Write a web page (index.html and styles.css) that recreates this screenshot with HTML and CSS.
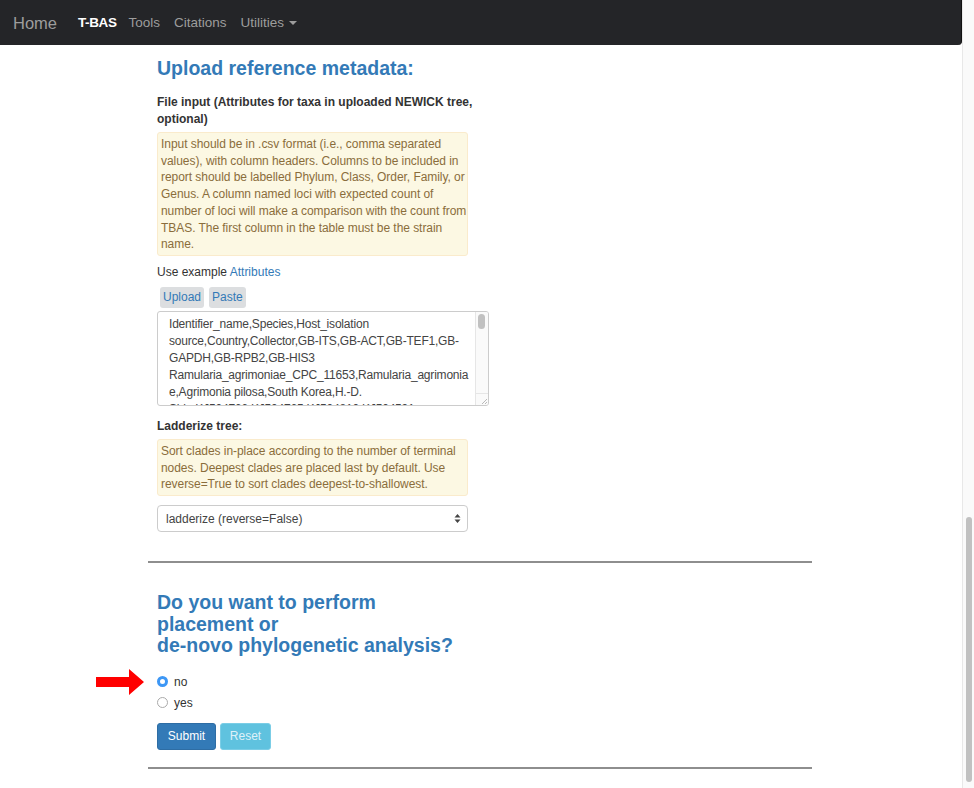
FILE: index.html
```html
<!DOCTYPE html>
<html>
<head>
<meta charset="utf-8">
<link rel="stylesheet" href="styles.css">
</head>
<body>
<div class="page">
  <nav class="navbar">
    <a class="brand">Home</a>
    <a class="nav-link active">T-BAS</a>
    <a class="nav-link">Tools</a>
    <a class="nav-link">Citations</a>
    <a class="nav-link">Utilities <span class="caret"></span></a>
  </nav>
  <div class="container">
    <div class="col">
      <h2 class="title">Upload reference metadata:</h2>
      <div class="label">File input (Attributes for taxa in uploaded NEWICK tree,<br>optional)</div>
      <div class="alert">Input should be in .csv format (i.e., comma separated<br>values), with column headers. Columns to be included in<br>report should be labelled Phylum, Class, Order, Family, or<br>Genus. A column named loci with expected count of<br>number of loci will make a comparison with the count from<br>TBAS. The first column in the table must be the strain<br>name.</div>
      <div class="example">Use example <a class="link">Attributes</a></div>
      <div class="btn-row">
        <span class="btn-light">Upload</span>
        <span class="btn-light">Paste</span>
      </div>
      <div class="textarea">
        <div class="ta-text">
          <div>Identifier_name,Species,Host_isolation</div>
          <div>source,Country,Collector,GB-ITS,GB-ACT,GB-TEF1,GB-</div>
          <div>GAPDH,GB-RPB2,GB-HIS3</div>
          <div>Ramularia_agrimoniae_CPC_11653,Ramularia_agrimonia</div>
          <div>e,Agrimonia pilosa,South Korea,H.-D.</div>
          <div class="ta-last">Shin,KJ504766,KJ504765,KJ504810,KJ504591</div>
        </div>
        <div class="ta-scroll">
          <div class="ta-track"><div class="ta-thumb"></div></div>
          <div class="ta-grip">
            <svg width="8" height="8" viewBox="0 0 8 8"><path d="M7 2 L2 7 M7 5 L5 7" stroke="#aaa" stroke-width="0.8" fill="none"/></svg>
          </div>
        </div>
      </div>
      <div class="label label-gap">Ladderize tree:</div>
      <div class="alert">Sort clades in-place according to the number of terminal<br>nodes. Deepest clades are placed last by default. Use<br>reverse=True to sort clades deepest-to-shallowest.</div>
      <div class="select">
        <span>ladderize (reverse=False)</span>
        <svg width="7" height="11" viewBox="0 0 7 11"><path d="M3.5 1 L6.5 4.5 H0.5 Z M3.5 10 L6.5 6.5 H0.5 Z" fill="#444"/></svg>
      </div>
    </div>
    <hr class="rule">
    <div class="col">
      <h2 class="title q">Do you want to perform placement or<br>de-novo phylogenetic analysis?</h2>
      <div class="radios">
        <div class="radio-row">
          <svg class="arrow" width="48" height="26" viewBox="0 0 48 26"><path d="M0 8 H33 V0 L48 13 L33 26 V18 H0 Z" fill="#f00"/></svg>
          <span class="radio checked"></span><span>no</span>
        </div>
        <div class="radio-row">
          <span class="radio"></span><span>yes</span>
        </div>
      </div>
      <div class="actions">
        <span class="btn btn-primary">Submit</span>
        <span class="btn btn-info">Reset</span>
      </div>
    </div>
    <hr class="rule rule-bottom">
  </div>
</div>
<div class="scrollbar"><div class="thumb"></div></div>
</body>
</html>
```
FILE: styles.css
```css
html, body {
  margin: 0;
  padding: 0;
  height: 788px;
  overflow: hidden;
}
body {
  display: flex;
  font-family: "Liberation Sans", Arial, sans-serif;
  font-size: 12px;
  color: #333;
  background: #fff;
}
.page {
  flex: 1;
  min-width: 0;
}
.navbar {
  height: 45px;
  background: #242528;
  border-radius: 0 0 4px 0;
  display: flex;
  align-items: center;
  box-sizing: border-box;
  padding-left: 13px;
  border-right: 1px solid #111;
}
.navbar a {
  color: #9d9d9d;
  text-decoration: none;
}
.brand {
  font-size: 16.5px;
  margin-right: 21px;
  position: relative;
  top: 1px;
}
.nav-link {
  font-size: 13.5px;
  margin-right: 14px;
}
.nav-link.active {
  color: #fff !important;
  font-weight: bold;
  letter-spacing: -0.4px;
  margin-right: 12px;
}
.caret {
  display: inline-block;
  width: 0;
  height: 0;
  border-left: 4px solid transparent;
  border-right: 4px solid transparent;
  border-top: 4px solid #9d9d9d;
  vertical-align: middle;
  margin-left: 1px;
}
.container {
  margin-left: 148px;
  width: 664px;
}
.col {
  padding-left: 9px;
  width: 311px;
}
.title {
  margin: 12px 0 0;
  font-size: 19.5px;
  line-height: 22px;
  font-weight: bold;
  color: #337ab7;
}
.label {
  margin-top: 15px;
  font-weight: bold;
  line-height: 17px;
  white-space: nowrap;
}
.label-gap {
  margin-top: 12px;
}
.alert {
  margin-top: 4px;
  background: #fcf8e3;
  border: 1px solid #faebcc;
  border-radius: 3px;
  color: #8a6d3b;
  padding: 3px 3px 2px;
  line-height: 16.7px;
  white-space: nowrap;
  letter-spacing: -0.05px;
}
.example {
  margin-top: 8px;
  line-height: 17px;
}
.link {
  color: #337ab7;
}
.btn-row {
  margin-top: 6px;
  display: flex;
  gap: 5px;
  padding-left: 3px;
}
.btn-light {
  background: #dcdee0;
  color: #337ab7;
  border-radius: 3px;
  height: 21px;
  line-height: 21px;
  padding: 0 3px;
}
.textarea {
  margin-top: 3px;
  width: 332px;
  height: 95px;
  box-sizing: border-box;
  border: 1px solid #ccc;
  border-radius: 3px;
  display: flex;
  overflow: hidden;
}
.ta-text {
  flex: 1;
  min-width: 0;
  padding: 4px 0 0 11px;
  line-height: 17px;
  color: #444;
  white-space: nowrap;
  overflow: hidden;
  letter-spacing: -0.2px;
}
.ta-last {
  height: 7px;
  overflow: hidden;
}
.ta-scroll {
  width: 12px;
  flex: none;
  border-left: 1px solid #e6e6e6;
  display: flex;
  flex-direction: column;
  background: #fafafa;
}
.ta-track {
  flex: 1;
  padding: 2px 2px 0 2px;
}
.ta-thumb {
  width: 7px;
  height: 15px;
  background: #c1c1c1;
  border-radius: 4px;
}
.ta-grip {
  height: 11px;
  border-top: 1px solid #e6e6e6;
  display: flex;
  justify-content: flex-end;
  align-items: flex-end;
}
.ta-grip svg {
  display: block;
}
.select {
  margin-top: 9px;
  height: 27px;
  box-sizing: border-box;
  border: 1px solid #ccc;
  border-radius: 4px;
  display: flex;
  align-items: center;
  justify-content: space-between;
  padding: 0 6px 0 8px;
  color: #444;
  background: #fff;
}
.rule {
  margin: 29px 0 0;
  border: 0;
  height: 2px;
  background: #8e8e8e;
}
.rule-bottom {
  margin-top: 17px;
}
.q {
  margin-top: 29px;
  line-height: 21.7px;
}
.radios {
  margin-top: 14px;
}
.radio-row {
  position: relative;
  height: 21px;
  display: flex;
  align-items: center;
  gap: 6px;
}
.arrow {
  position: absolute;
  left: -61px;
  top: -2px;
}
.radio {
  width: 11px;
  height: 11px;
  box-sizing: border-box;
  border-radius: 50%;
  border: 1px solid #aaa;
  background: #fff;
}
.radio.checked {
  border: 3.5px solid #3d97f5;
  background: #fff;
}
.actions {
  margin-top: 10px;
  display: flex;
  gap: 4px;
}
.btn {
  height: 27px;
  line-height: 27px;
  box-sizing: border-box;
  border-radius: 3px;
  color: #fff;
  text-align: center;
}
.btn-primary {
  width: 59px;
  background: #337ab7;
  border: 1px solid #2e6da4;
  line-height: 25px;
}
.btn-info {
  width: 51px;
  background: #5fc2df;
  border: 1px solid #7bcde6;
  line-height: 25px;
  color: rgba(255,255,255,0.8);
}
.scrollbar {
  width: 11px;
  flex: none;
  background: #fafafa;
  border-left: 1px solid #e8e8e8;
  position: relative;
}
.thumb {
  position: absolute;
  left: 3px;
  top: 517px;
  width: 6px;
  height: 265px;
  border-radius: 3px;
  background: #c1c1c1;
}
```
